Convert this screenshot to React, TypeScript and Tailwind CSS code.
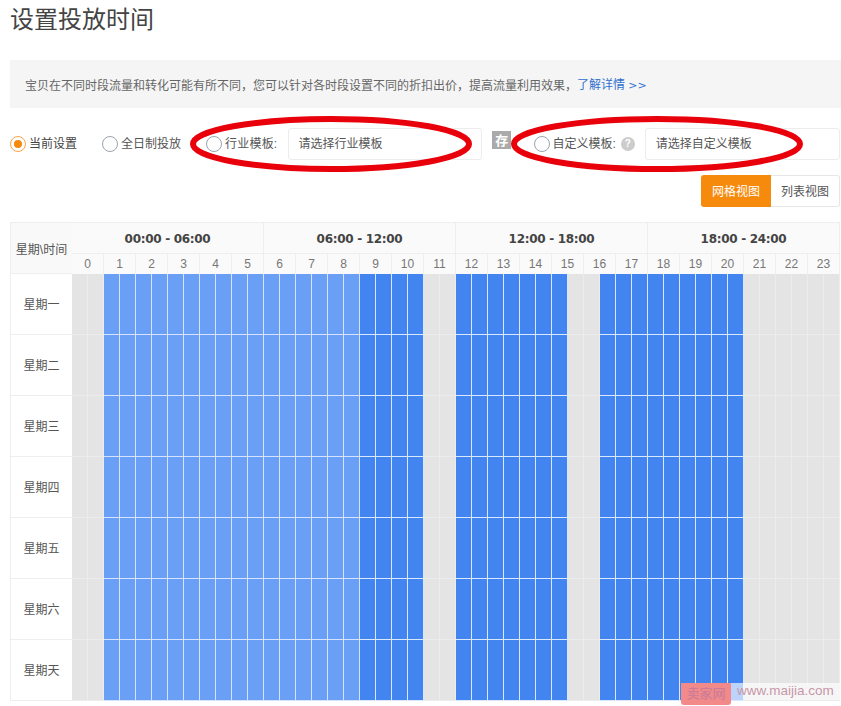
import React from "react";

const hours = Array.from({ length: 24 }, (_, i) => i);
const days = ["星期一", "星期二", "星期三", "星期四", "星期五", "星期六", "星期天"];
const ranges = ["00:00 - 06:00", "06:00 - 12:00", "12:00 - 18:00", "18:00 - 24:00"];

function kind(i: number) {
  if (i >= 2 && i < 18) return "bg-[#6a9ff6] border-[#d5e4fc]";
  if ((i >= 18 && i < 22) || (i >= 24 && i < 31) || (i >= 33 && i < 42)) return "bg-[#4285f0] border-[#dbe7fb]";
  return "bg-[#e4e4e4] border-[#ececec]";
}

function Radio({ on }: { on?: boolean }) {
  return (
    <span className={`flex h-[16px] w-[16px] shrink-0 items-center justify-center rounded-full border bg-white ${on ? "border-[#f5a54a]" : "border-[#9aa3ad]"}`}>
      {on && <span className="h-[8px] w-[8px] rounded-full bg-[#f68a0c]" />}
    </span>
  );
}

export default function App() {
  return (
    <div className="relative h-[706px] w-[841px] overflow-hidden bg-white font-['Liberation_Sans','Noto_Sans_CJK_SC',sans-serif] text-[12px] text-[#555]">
      <h1 className="ml-[10px] pt-[4px] text-[24px] leading-[32px] font-normal text-[#444]">设置投放时间</h1>

      <div className="mt-[24px] ml-[10px] flex h-[48px] w-[831px] items-center bg-[#f5f5f5] pt-[3px] pl-[15px] text-[#666]">
        <span>宝贝在不同时段流量和转化可能有所不同，您可以针对各时段设置不同的折扣出价，提高流量利用效果，</span>
        <span className="text-[#2f6fd0]">了解详情 <span className="font-['DejaVu_Sans',sans-serif] text-[11px]">&gt;&gt;</span></span>
      </div>

      <div className="mt-[20px] ml-[10px] flex h-[32px] items-center">
        <Radio on />
        <span className="ml-[3px] text-[#444]">当前设置</span>
        <span className="ml-[25px]"><Radio /></span>
        <span className="ml-[3px]">全日制投放</span>
        <span className="ml-[25px]"><Radio /></span>
        <span className="ml-[3px] tracking-[0.2px]">行业模板:</span>
        <div className="ml-[11px] flex h-[32px] w-[194px] items-center rounded-[3px] border border-[#ececec] pl-[9px]">请选择行业模板</div>
        <span className="mt-[-8px] ml-[10px] flex h-[18px] w-[19px] items-center justify-center bg-[#aaa] text-[13px] leading-none font-bold text-white">存</span>
        <span className="ml-[23px]"><Radio /></span>
        <span className="ml-[2px]">自定义模板:</span>
        <span className="ml-[5px] flex h-[14px] w-[14px] items-center justify-center rounded-full bg-[#ccc] text-[10px] leading-none font-bold text-white">?</span>
        <div className="ml-[10px] flex h-[32px] w-[195px] items-center rounded-[3px] border border-[#ececec] pl-[10px]">请选择自定义模板</div>
      </div>

      <div className="mt-[15px] mr-[1px] flex justify-end">
        <span className="flex h-[32px] w-[70px] items-center justify-center rounded-l-[3px] bg-[#f68a0c] pt-[2px] text-white">网格视图</span>
        <span className="flex h-[32px] w-[69px] items-center justify-center rounded-r-[3px] border border-l-0 border-[#e6e6e6] pt-[2px]">列表视图</span>
      </div>

      <div className="mt-[15px] ml-[10px] grid w-[830px] grid-cols-[61px_repeat(48,16px)] grid-rows-[32px_20px_repeat(7,61px)] border-l border-[#eee]">
        <div className="col-start-1 row-span-2 row-start-1 flex items-center justify-center border-t border-b border-[#eee] bg-[#f9f9f9] pt-[3px] text-[#555]">星期\时间</div>
        {ranges.map((r) => (
          <div key={r} className="col-span-12 flex items-center justify-center border-t border-r border-b border-[#eee] bg-[#fafafa] pt-[2px] font-['DejaVu_Sans',sans-serif] text-[12px] font-bold tracking-[-0.3px] text-[#444]">{r}</div>
        ))}
        {hours.map((h) => (
          <div key={h} className="col-span-2 flex items-center justify-center border-r border-[#eee] bg-[#fafafa] font-['Liberation_Sans',sans-serif] text-[#777]">{h}</div>
        ))}
        {days.map((d) => (
          <React.Fragment key={d}>
            <div className="flex items-center justify-center border-b border-[#eee] pt-[2px] text-[#555]">{d}</div>
            {Array.from({ length: 48 }, (_, i) => (
              <div key={i} className={`border-r border-b ${kind(i)}`} />
            ))}
          </React.Fragment>
        ))}
      </div>

      <svg className="absolute top-0 left-0" width="841" height="706" fill="none" stroke="#e8000b" strokeWidth="6">
        <ellipse cx="331" cy="144" rx="138" ry="25" />
        <ellipse cx="657" cy="144" rx="143" ry="25" />
      </svg>

      <div className="absolute top-[683px] left-[681px] flex h-[22px] w-[50px] items-center justify-center rounded-b-[3px] bg-[#f28a8a] text-[13px] text-[#c97a9a]">卖家网</div>
      <div className="absolute top-[683px] left-[731px] flex h-[17px] w-[110px] items-center bg-white/65 pl-[6px] text-[13.5px] text-[#c896a8]">www.maijia.com</div>
    </div>
  );
}
